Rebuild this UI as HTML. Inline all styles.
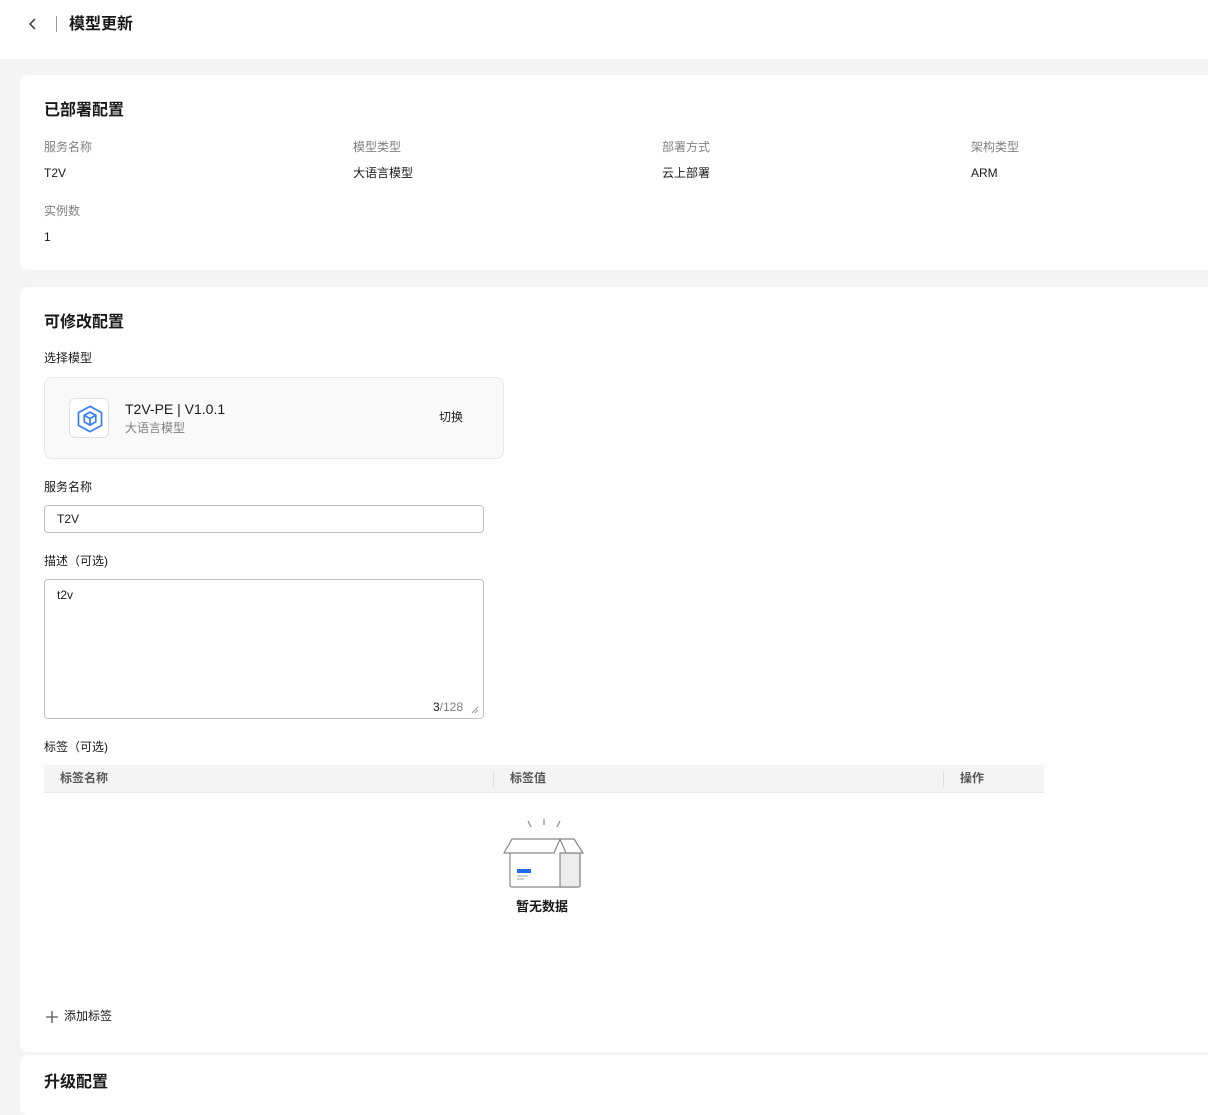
<!DOCTYPE html>
<html><head><meta charset="utf-8"><style>
*{box-sizing:border-box;margin:0;padding:0}
body{width:1208px;height:1091px;overflow:hidden;background:#f4f4f4;font-family:"Liberation Sans","Noto Sans CJK SC",sans-serif;color:#191919;font-size:12px;position:relative;line-height:1.3}
.abs{position:absolute}
.hdr{left:0;top:0;width:1208px;height:59px;background:#fff}
.card{background:#fff;border-radius:8px;left:20px;width:1200px}
.h{font-size:16px;font-weight:bold;color:#191919}
.lbl{color:#808080;font-size:12px}
.val{font-size:12px;color:#191919}
</style></head><body>
<div class="abs hdr">
<svg class="abs" style="left:27px;top:17px" width="12" height="14" viewBox="0 0 12 14"><path d="M8 2 L3 7 L8 12" fill="none" stroke="#333" stroke-width="1.5"/></svg>
<div class="abs" style="left:56px;top:16px;width:1px;height:16px;background:#999"></div>
<div class="abs" style="left:69px;top:15px;font-size:16px;font-weight:bold">模型更新</div>
</div>

<div class="abs card" style="top:75px;height:195px">
<div class="abs h" style="left:24px;top:26px">已部署配置</div>
<div class="abs lbl" style="left:24px;top:65px">服务名称</div><div class="abs val" style="left:24px;top:91px">T2V</div>
<div class="abs lbl" style="left:333px;top:65px">模型类型</div><div class="abs val" style="left:333px;top:91px">大语言模型</div>
<div class="abs lbl" style="left:642px;top:65px">部署方式</div><div class="abs val" style="left:642px;top:91px">云上部署</div>
<div class="abs lbl" style="left:951px;top:65px">架构类型</div><div class="abs val" style="left:951px;top:91px">ARM</div>
<div class="abs lbl" style="left:24px;top:129px">实例数</div><div class="abs val" style="left:24px;top:155px">1</div>
</div>

<div class="abs card" style="top:287px;height:765px">
<div class="abs h" style="left:24px;top:26px">可修改配置</div>
<div class="abs val" style="left:24px;top:64px">选择模型</div>
<div class="abs" style="left:24px;top:90px;width:460px;height:82px;background:#f9f9f9;border:1px solid #e8e8e8;border-radius:8px">
 <div class="abs" style="left:24px;top:20px;width:40px;height:40px;background:#fff;border:1px solid #e0e0e0;border-radius:6px">
 <svg class="abs" style="left:5px;top:5px" width="30" height="30" viewBox="0 0 26 26" fill="none" stroke="#3c7ef6" stroke-width="1.5"><path d="M13 2 L23 7.5 V18.5 L13 24 L3 18.5 V7.5 Z"/><path d="M13 7 L18 9.8 V15.5 L13 18.3 L8 15.5 V9.8 Z"/><path d="M8 9.8 L13 12.6 L18 9.8 M13 12.6 V18.3"/></svg>
 </div>
 <div class="abs" style="left:80px;top:22px;font-size:14px">T2V-PE | V1.0.1</div>
 <div class="abs lbl" style="left:80px;top:43px">大语言模型</div>
 <div class="abs val" style="left:394px;top:32px">切换</div>
</div>
<div class="abs val" style="left:24px;top:193px">服务名称</div>
<div class="abs" style="left:24px;top:218px;width:440px;height:28px;border:1px solid #c2c2c2;border-radius:4px;padding:6px 12px">T2V</div>
<div class="abs val" style="left:24px;top:267px">描述（可选)</div>
<div class="abs" style="left:24px;top:292px;width:440px;height:140px;border:1px solid #c2c2c2;border-radius:4px;padding:8px 12px">t2v
 <div class="abs" style="right:20px;bottom:2px;color:#808080"><span style="color:#191919">3</span>/128</div>
 <svg class="abs" style="right:4px;bottom:4px" width="8" height="8"><path d="M1 7 L7 1 M4 7 L7 4" stroke="#999"/></svg>
</div>
<div class="abs val" style="left:24px;top:453px">标签（可选)</div>
<div class="abs" style="left:24px;top:478px;width:1000px;height:28px;background:#f4f4f4;border-bottom:1px solid #e8e8e8;font-weight:bold;color:#575757">
 <div class="abs" style="left:16px;top:6px">标签名称</div>
 <div class="abs" style="left:449px;top:6px;width:1px;height:16px;background:#ddd"></div>
 <div class="abs" style="left:466px;top:6px">标签值</div>
 <div class="abs" style="left:899px;top:6px;width:1px;height:16px;background:#ddd"></div>
 <div class="abs" style="left:916px;top:6px">操作</div>
</div>
<svg class="abs" style="left:480px;top:528px" width="90" height="75" viewBox="0 0 90 75" fill="none" stroke="#888" stroke-width="1.2">
<path d="M28 6 L31 12 M44 4 V10 M60 6 L57 12"/>
<path d="M10 38 V70 Q10 72 12 72 H78 Q80 72 80 70 V38" fill="#fff"/>
<path d="M60 38 V72 H78 Q80 72 80 70 V38 Z" fill="#ececec"/>
<path d="M4 38 L12 24 H60 L54 38 Z" fill="#fff"/>
<path d="M60 24 L74 24 L83 38 H66 Z" fill="#fff"/>
<rect x="17" y="54" width="14" height="4" fill="#1f6cf2" stroke="none"/>
<path d="M17 61 H28 M17 64 H24" stroke="#888" stroke-width="0.8"/>
</svg>
<div class="abs" style="left:496px;top:612px;font-weight:bold;font-size:13px">暂无数据</div>
<svg class="abs" style="left:26px;top:724px" width="12" height="12"><path d="M6 0 V12 M0 6 H12" stroke="#555" stroke-width="1.3"/></svg>
<div class="abs" style="left:44px;top:722px;font-size:12px">添加标签</div>
</div>

<div class="abs card" style="top:1055px;height:60px">
<div class="abs h" style="left:24px;top:18px">升级配置</div>
</div>
</body></html>
